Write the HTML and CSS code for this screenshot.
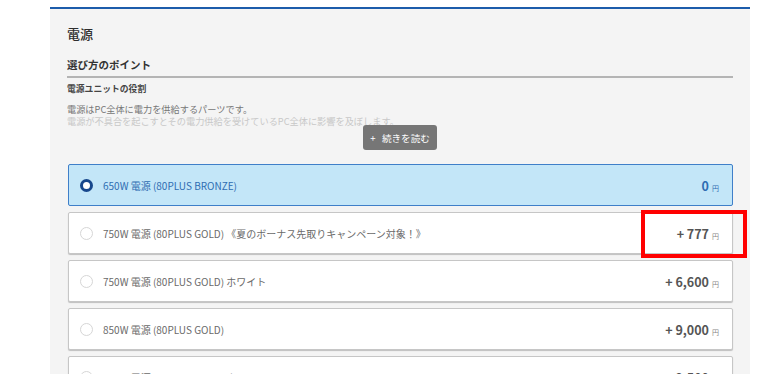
FILE: index.html
```html
<!DOCTYPE html>
<html lang="ja">
<head>
<meta charset="utf-8">
<link rel="stylesheet" href="styles.css">
</head>
<body>
<div class="panel">
  <h2 class="title">電源</h2>
  <h3 class="sub">選び方のポイント</h3>
  <h4 class="minor">電源ユニットの役割</h4>
  <p class="desc"><span class="l1">電源はPC全体に電力を供給するパーツです。</span><br><span class="l2">電源が不具合を起こすとその電力供給を受けているPC全体に影響を及ぼします。</span></p>
  <div class="more-wrap"><button class="more">+&nbsp;&nbsp;&nbsp;続きを読む</button></div>
  <div class="options">
    <div class="opt selected">
      <span class="radio"></span>
      <span class="name">650W 電源 (80PLUS BRONZE)</span>
      <span class="price">0<small>円</small></span>
    </div>
    <div class="opt">
      <span class="radio"></span>
      <span class="name">750W 電源 (80PLUS GOLD) 《夏のボーナス先取りキャンペーン対象！》</span>
      <span class="price">+ 777<small>円</small></span>
      <span class="mark"></span>
    </div>
    <div class="opt">
      <span class="radio"></span>
      <span class="name">750W 電源 (80PLUS GOLD) ホワイト</span>
      <span class="price">+ 6,600<small>円</small></span>
    </div>
    <div class="opt">
      <span class="radio"></span>
      <span class="name">850W 電源 (80PLUS GOLD)</span>
      <span class="price">+ 9,000<small>円</small></span>
    </div>
    <div class="opt">
      <span class="radio"></span>
      <span class="name">850W 電源 (80PLUS GOLD) ホワイト</span>
      <span class="price">+ 9,500<small>円</small></span>
    </div>
  </div>
</div>
</body>
</html>
```

FILE: styles.css
```css
html, body {
  margin: 0;
  padding: 0;
  background: #fff;
  font-family: "Noto Sans CJK JP", "Noto Sans", sans-serif;
  overflow: hidden;
}
.panel {
  margin: 7px 0 0 50px;
  width: 666px;
  min-height: 400px;
  padding: 16px 17px 0 17px;
  background: #f4f4f4;
  border-top: 2px solid #1c5cab;
}
.title {
  margin: 0;
  font-size: 13px;
  line-height: 18px;
  font-weight: 500;
  color: #2e2e2e;
}
.sub {
  margin: 14px 0 0;
  padding-bottom: 3px;
  font-size: 10.5px;
  line-height: 16px;
  font-weight: 700;
  color: #333;
  border-bottom: 2px solid #b4b4b4;
}
.minor {
  margin: 5px 0 0;
  font-size: 8.8px;
  line-height: 12px;
  font-weight: 700;
  color: #444;
}
.desc {
  margin: 9px 0 0;
  font-size: 9.2px;
  line-height: 11.5px;
  color: #777;
  height: 21px;
  white-space: nowrap;
}
.desc .l2 { color: #c8c8c8; }
.more-wrap {
  display: flex;
  justify-content: center;
}
.more {
  width: 74px;
  height: 25px;
  border: none;
  border-radius: 3px;
  background: #767676;
  color: #fff;
  font-family: inherit;
  font-size: 9.6px;
  padding: 0;
}
.options {
  margin: 14px 0 0 1px;
  display: flex;
  flex-direction: column;
  gap: 6px;
}
.opt {
  position: relative;
  box-sizing: border-box;
  height: 42px;
  display: flex;
  align-items: center;
  padding: 0 13px 0 11px;
  background: #fff;
  border: 1px solid #c6c6c6;
  border-radius: 2px;
  box-shadow: 0 1px 1px rgba(0,0,0,0.22);
  color: #6a6a6a;
  font-size: 10px;
}
.opt.selected {
  background: #c3e6f8;
  border-color: #3f7fc9;
  box-shadow: none;
  color: #2f6db2;
}
.radio {
  box-sizing: border-box;
  width: 13px;
  height: 13px;
  border-radius: 50%;
  border: 1px solid #d6d6d6;
  background: #fff;
  flex: none;
}
.selected .radio {
  border: 3.5px solid #17478c;
  background: #fff;
}
.name {
  margin-left: 10px;
  flex: 1;
}
.price {
  font-size: 12.5px;
  font-weight: 700;
  color: #555;
}
.selected .price { color: #2f6db2; }
.price small {
  font-size: 7px;
  font-weight: 400;
  color: #888;
  margin-left: 3px;
}
.selected .price small { color: #2f6db2; }
.mark {
  position: absolute;
  top: -3px;
  right: -15px;
  width: 106px;
  height: 48px;
  box-sizing: border-box;
  border: 4px solid #f00;
}
```
